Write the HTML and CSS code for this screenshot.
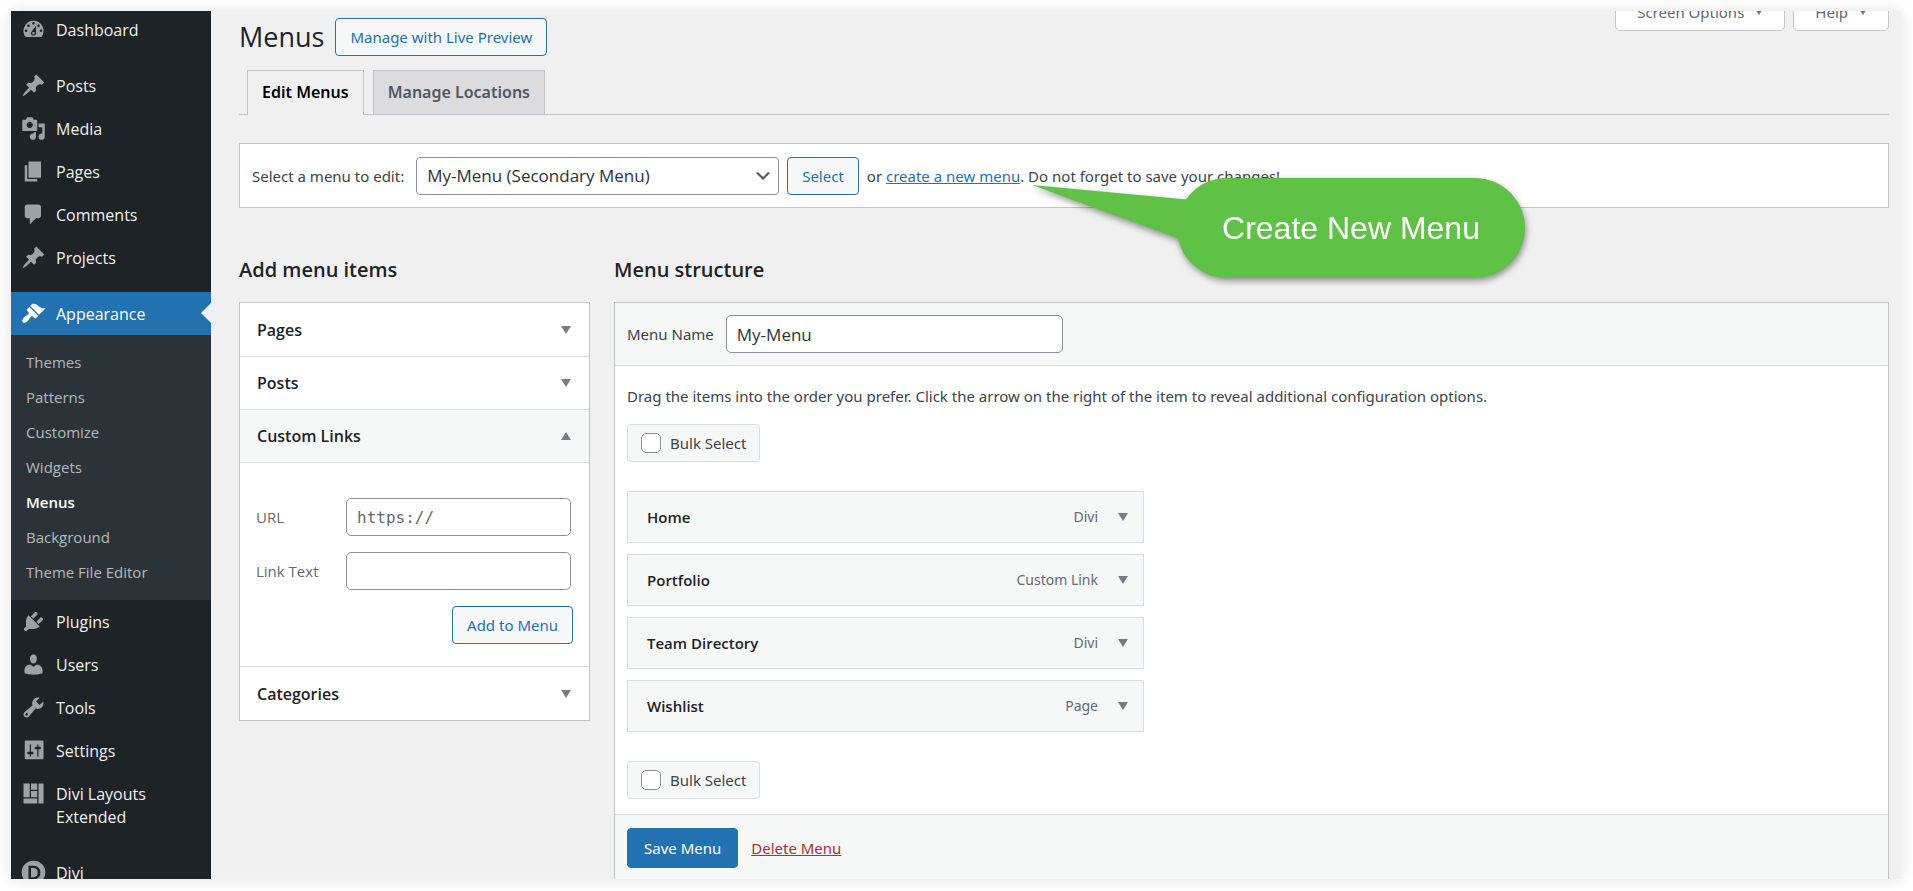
FILE: index.html
```html
<!DOCTYPE html>
<html lang="en">
<head>
<meta charset="utf-8">
<title>Menus</title>
<link rel="stylesheet" href="styles.css">
</head>
<body>
<div class="frame">
  <nav class="sidebar" aria-label="Main menu">
    <a class="item" href="#"><svg class="icon" viewBox="0 0 20 20"><path fill-rule="evenodd" d="M3.76 16h12.48A7.998 7.998 0 0 0 10 3a7.998 7.998 0 0 0-6.24 13zM10 4c.55 0 1 .45 1 1s-.45 1-1 1-1-.45-1-1 .45-1 1-1zM6 6c.55 0 1 .45 1 1s-.45 1-1 1-1-.45-1-1 .45-1 1-1zm8 0c.55 0 1 .45 1 1s-.45 1-1 1-1-.45-1-1 .45-1 1-1zm-5.37 5.55L12 7v6c0 1.1-.9 2-2 2s-2-.9-2-2c0-.57.24-1.08.63-1.45zM4 10c.55 0 1 .45 1 1s-.45 1-1 1-1-.45-1-1 .45-1 1-1zm12 0c.55 0 1 .45 1 1s-.45 1-1 1-1-.45-1-1 .45-1 1-1zm-5 3c0-.55-.45-1-1-1s-1 .45-1 1 .45 1 1 1 1-.45 1-1z"/></svg>Dashboard</a>
    <a class="item spaced" href="#"><svg class="icon" viewBox="0 0 20 20"><path d="M10.44 3.02l1.82-1.82 6.36 6.35-1.83 1.82c-1.05-.68-2.48-.57-3.41.36l-.75.75c-.92.93-1.04 2.35-.35 3.41l-1.83 1.82-2.41-2.41-2.8 2.79c-.42.42-3.38 2.71-3.8 2.29s1.86-3.39 2.28-3.81l2.79-2.79L4.1 9.36l1.83-1.82c1.05.69 2.48.57 3.4-.36l.75-.75c.93-.92 1.05-2.35.36-3.41z"/></svg>Posts</a>
    <a class="item" href="#"><svg class="icon" viewBox="0 0 20 20"><path fill-rule="evenodd" d="M13 11V4c0-.55-.45-1-1-1h-1.67L9 1H5L3.67 3H2c-.55 0-1 .45-1 1v7c0 .55.45 1 1 1h10c.55 0 1-.45 1-1zM7 4.5c1.38 0 2.5 1.12 2.5 2.5S8.38 9.5 7 9.5 4.5 8.38 4.5 7 5.62 4.5 7 4.5zM14 6h5v10.5c0 1.38-1.12 2.5-2.5 2.5S14 17.88 14 16.5s1.12-2.5 2.5-2.5c.17 0 .34.02.5.05V9h-3V6zm-4 8.05V13h2v3.5c0 1.38-1.12 2.5-2.5 2.5S7 17.88 7 16.5 8.12 14 9.5 14c.17 0 .34.02.5.05z"/></svg>Media</a>
    <a class="item" href="#"><svg class="icon" viewBox="0 0 20 20"><path d="M6 15V2h10v13H6zm-1 1h8v2H3V5h2v11z"/></svg>Pages</a>
    <a class="item" href="#"><svg class="icon" viewBox="0 0 20 20"><path d="M5 2h9c1.1 0 2 .9 2 2v7c0 1.1-.9 2-2 2h-2l-5 5v-5H5c-1.1 0-2-.9-2-2V4c0-1.1.9-2 2-2z"/></svg>Comments</a>
    <a class="item" href="#"><svg class="icon" viewBox="0 0 20 20"><path d="M10.44 3.02l1.82-1.82 6.36 6.35-1.83 1.82c-1.05-.68-2.48-.57-3.41.36l-.75.75c-.92.93-1.04 2.35-.35 3.41l-1.83 1.82-2.41-2.41-2.8 2.79c-.42.42-3.38 2.71-3.8 2.29s1.86-3.39 2.28-3.81l2.79-2.79L4.1 9.36l1.83-1.82c1.05.69 2.48.57 3.4-.36l.75-.75c.93-.92 1.05-2.35.36-3.41z"/></svg>Projects</a>
    <a class="item spaced current" href="#"><svg class="icon" viewBox="0 0 20 20"><path d="M14.48 11.06L7.41 3.99l1.5-1.5c.5-.56 2.3-.47 3.51.32 1.21.8 1.43 1.28 2.91 2.1 1.18.64 2.45 1.26 4.45.85zm-.71.71L6.7 4.7 4.93 6.47c-.39.39-.39 1.02 0 1.41l1.06 1.06c.39.39.39 1.03 0 1.42-.6.6-1.43 1.11-2.21 1.69-.35.26-.7.53-1.01.84C1.43 14.23.4 16.08 1.4 17.07c.99 1 2.84-.03 4.18-1.36.31-.31.58-.66.85-1.02.57-.78 1.08-1.61 1.69-2.21.39-.39 1.02-.39 1.41 0l1.06 1.06c.39.39 1.02.39 1.41 0z"/></svg>Appearance</a>
    <div class="submenu">
      <a href="#">Themes</a>
      <a href="#">Patterns</a>
      <a href="#">Customize</a>
      <a href="#">Widgets</a>
      <a class="active" href="#">Menus</a>
      <a href="#">Background</a>
      <a href="#">Theme File Editor</a>
    </div>
    <a class="item" href="#"><svg class="icon" viewBox="0 0 20 20"><path d="M13.11 4.36L9.87 7.6 8 5.73l3.24-3.24c.35-.34 1.05-.2 1.56.32.52.51.66 1.21.31 1.55zm-8 1.77l.91-1.12 9.01 9.01-1.19.84c-.71.71-2.63 1.16-3.82 1.16H6.14L4.9 17.26c-.59.59-1.54.59-2.12 0-.59-.58-.59-1.53 0-2.12l1.24-1.24v-3.88c0-1.13.4-3.19 1.09-3.89zm7.26 3.97l3.24-3.24c.34-.35 1.04-.21 1.55.31.52.51.66 1.21.31 1.55l-3.24 3.25z"/></svg>Plugins</a>
    <a class="item" href="#"><svg class="icon" viewBox="0 0 20 20"><path d="M10 9.25c-2.27 0-2.73-3.44-2.73-3.44C7 4.02 7.82 2 9.97 2c2.16 0 2.98 2.02 2.71 3.81 0 0-.41 3.44-2.68 3.44zm0 2.57L12.72 10c2.39 0 4.52 2.33 4.52 4.53v2.49s-3.65 1.13-7.24 1.13c-3.65 0-7.24-1.13-7.24-1.13v-2.49c0-2.25 1.94-4.48 4.47-4.48z"/></svg>Users</a>
    <a class="item" href="#"><svg class="icon" viewBox="0 0 20 20"><path fill-rule="evenodd" d="M16.68 9.77c-1.34 1.34-3.3 1.67-4.95.99l-5.41 6.52c-.99.99-2.59.99-3.58 0s-.99-2.59 0-3.57l6.52-5.42c-.68-1.65-.35-3.61.99-4.95 1.28-1.28 3.12-1.62 4.72-1.06l-2.89 2.89 2.82 2.82 2.86-2.87c.53 1.58.18 3.39-1.08 4.65zM3.81 16.21c.4.39 1.04.39 1.43 0 .4-.4.4-1.04 0-1.43-.39-.4-1.03-.4-1.43 0-.39.39-.39 1.03 0 1.43z"/></svg>Tools</a>
    <a class="item" href="#"><svg class="icon" viewBox="0 0 20 20"><path fill-rule="evenodd" d="M18 16V3c0-.55-.45-1-1-1H4c-.55 0-1 .45-1 1v13c0 .55.45 1 1 1h13c.55 0 1-.45 1-1zM8 11h1c.55 0 1 .45 1 1s-.45 1-1 1H8v1.500c0 .28-.22.5-.5.5s-.5-.22-.5-.5V13H6c-.55 0-1-.45-1-1s.45-1 1-1h1V5.500c0-.28.22-.5.5-.5s.5.22.5.5V11zm5-2h-1c-.55 0-1-.45-1-1s.45-1 1-1h1V5.500c0-.28.22-.5.5-.5s.5.22.5.5V7h1c.55 0 1 .45 1 1s-.45 1-1 1h-1v5.500c0 .28-.22.5-.5.5s-.5-.22-.5-.5V9z"/></svg>Settings</a>
    <a class="item" href="#"><svg class="icon" viewBox="0 0 20 20"><path d="M2 2h5v11H2V2zm6 0h5v5H8V2zm6 0h4v16h-4V2zM8 8h5v5H8V8zm-6 6h11v4H2v-4z"/></svg>Divi Layouts Extended</a>
    <a class="item spaced" href="#"><svg class="icon" viewBox="0 0 20 20"><path fill-rule="evenodd" d="M10 .5a9.500 9.500 0 1 0 0 19 9.500 9.500 0 0 0 0-19zM6 4.500h4c3.500 0 5.500 2.200 5.500 5.500s-2 5.500-5.500 5.500H6zM8 6.300v7.400h2c2.200 0 3.400-1.400 3.400-3.700S12.200 6.300 10 6.300z"/></svg>Divi</a>
  </nav>

  <main class="content">
    <header class="page-head">
      <h1>Menus</h1>
      <button class="button" type="button">Manage with Live Preview</button>
      <div class="screen-meta">
        <button class="meta-button" type="button">Screen Options<span class="arrow"></span></button>
        <button class="meta-button" type="button">Help<span class="arrow"></span></button>
      </div>
    </header>

    <div class="tabs">
      <a class="tab tab-active" href="#">Edit Menus</a>
      <a class="tab" href="#">Manage Locations</a>
    </div>

    <section class="manage">
      <label for="menu-select">Select a menu to edit:</label>
      <div class="select-wrap">
        <select id="menu-select"><option>My-Menu (Secondary Menu)</option></select>
        <svg class="chevron" viewBox="0 0 20 20"><path d="M5 6l5 5 5-5 2 1-7 7-7-7 2-1z"/></svg>
      </div>
      <button class="button" type="button">Select</button>
      <span class="hint">or <a href="#">create a new menu</a>. Do not forget to save your changes!</span>
      <div class="callout">
        <svg class="callout-tail" viewBox="0 0 160 60"><path d="M0 0L160 15V60L145 53z"/></svg>
        <div class="callout-body">Create New Menu</div>
      </div>
    </section>

    <div class="columns">
      <section class="col-left">
        <h2>Add menu items</h2>
        <div class="accordion">
          <button class="acc-head" type="button">Pages<span class="arrow"></span></button>
          <button class="acc-head" type="button">Posts<span class="arrow"></span></button>
          <button class="acc-head acc-open" type="button">Custom Links<span class="arrow arrow-up"></span></button>
          <div class="acc-body">
            <div class="field"><label for="url">URL</label><input class="mono" id="url" type="text" placeholder="https://"></div>
            <div class="field"><label for="link-text">Link Text</label><input id="link-text" type="text"></div>
            <button class="button" type="button">Add to Menu</button>
          </div>
          <button class="acc-head" type="button">Categories<span class="arrow"></span></button>
        </div>
      </section>

      <section class="col-right">
        <h2>Menu structure</h2>
        <div class="structure">
          <div class="structure-head"><label for="menu-name">Menu Name</label><input id="menu-name" type="text" value="My-Menu"></div>
          <div class="structure-body">
            <p>Drag the items into the order you prefer. Click the arrow on the right of the item to reveal additional configuration options.</p>
            <label class="bulk"><input type="checkbox">Bulk Select</label>
            <ul class="menu-items">
              <li><strong>Home</strong><span>Divi</span><span class="arrow"></span></li>
              <li><strong>Portfolio</strong><span>Custom Link</span><span class="arrow"></span></li>
              <li><strong>Team Directory</strong><span>Divi</span><span class="arrow"></span></li>
              <li><strong>Wishlist</strong><span>Page</span><span class="arrow"></span></li>
            </ul>
            <label class="bulk"><input type="checkbox">Bulk Select</label>
          </div>
          <div class="structure-foot">
            <button class="button primary" type="button">Save Menu</button>
            <a class="delete" href="#">Delete Menu</a>
          </div>
        </div>
      </section>
    </div>
  </main>
</div>
</body>
</html>
```
FILE: styles.css
```css
* { box-sizing: border-box; }

body {
  margin: 0;
  padding: 11px 12px 12px 11px;
  height: 100vh;
  overflow: hidden;
  background: #fff;
  color: #3c434a;
  font: 15px/24px "Noto Sans", "Open Sans", sans-serif;
}

button, input, select { font: inherit; color: inherit; }
a { color: #2271b1; }
h1, h2, p, ul { margin: 0; padding: 0; }

.frame {
  display: flex;
  height: 100%;
  overflow: hidden;
  background: #f0f0f1;
  box-shadow: 0 0 14px rgba(0, 0, 0, 0.12);
}

/* Sidebar */
.sidebar {
  flex: 0 0 200px;
  margin-top: -3px;
  background: #1d2327;
  font-family: "Open Sans", "Noto Sans", sans-serif;
}
.item {
  position: relative;
  display: flex;
  gap: 10px;
  padding: 11px 30px 9px 10px;
  color: #f0f0f1;
  font-size: 16px;
  line-height: 23px;
  text-decoration: none;
}
.spaced { margin-top: 13px; }
.icon {
  flex: none;
  width: 25px;
  height: 25px;
  margin: -2px 0 0;
  fill: #9ca2a7;
}
.current { background: #2271b1; color: #fff; }
.current .icon { fill: #fff; }
.current::after {
  content: "";
  position: absolute;
  right: 0;
  top: 11px;
  border: 10px solid transparent;
  border-left: 0;
  border-right-color: #f0f0f1;
}
.submenu {
  display: flex;
  flex-direction: column;
  padding: 10px 15px;
  background: #2c3338;
}
.submenu a {
  color: #b4b9be;
  line-height: 35px;
  text-decoration: none;
}
.submenu .active { color: #fff; font-weight: 600; }

/* Content */
.content {
  flex: 1;
  min-width: 0;
  padding: 0 12px 0 28px;
}
.page-head {
  display: flex;
  align-items: flex-start;
  gap: 11px;
  padding-top: 7px;
}
h1 {
  color: #1d2327;
  font-family: "Open Sans", "Noto Sans", sans-serif;
  font-size: 27px;
  font-weight: 400;
  line-height: 38px;
}
.button {
  height: 38px;
  padding: 0 14px;
  border: 1px solid #2271b1;
  border-radius: 4px;
  background: #f6f7f7;
  color: #2271b1;
}
.screen-meta {
  display: flex;
  gap: 8px;
  margin: -26px 0 0 auto;
}
.meta-button {
  display: flex;
  align-items: center;
  gap: 11px;
  height: 39px;
  padding: 0 21px;
  border: 1px solid #c3c4c7;
  border-radius: 0 0 5px 5px;
  background: #fff;
  color: #646970;
}
.arrow {
  flex: none;
  border: 5px solid transparent;
  border-top: 8px solid #787c82;
  border-bottom: 0;
}
.arrow-up { border-top: 0; border-bottom: 8px solid #787c82; }
.meta-button .arrow { border-width: 6px 4px 0; }

.tabs {
  display: flex;
  gap: 9px;
  margin-top: 14px;
  padding: 0 8px;
  border-bottom: 1px solid #c3c4c7;
}
.tab {
  padding: 9px 14px;
  border: 1px solid #c3c4c7;
  border-bottom: 0;
  background: #dcdcde;
  color: #50575e;
  font-size: 16px;
  font-weight: 600;
  line-height: 25px;
  text-decoration: none;
}
.tab-active {
  margin-bottom: -1px;
  background: #f0f0f1;
  color: #000;
}

.manage {
  position: relative;
  display: flex;
  align-items: center;
  gap: 8px;
  margin-top: 28px;
  padding: 13px 12px 12px;
  border: 1px solid #c3c4c7;
  background: #fff;
}
.manage label { margin-right: 4px; }
.select-wrap { position: relative; flex: 0 1 363px; }
.manage select {
  appearance: none;
  display: block;
  width: 100%;
  height: 38px;
  padding: 0 10px;
  border: 1px solid #8c8f94;
  border-radius: 4px;
  background: #fff;
  color: #2c3338;
  font-family: "Open Sans", "Noto Sans", sans-serif;
  font-size: 17px;
}
.chevron {
  position: absolute;
  right: 6px;
  top: 9px;
  width: 20px;
  height: 20px;
  fill: #50575e;
}
.callout {
  position: absolute;
  left: 792px;
  top: 34px;
  width: 493px;
  height: 100px;
  filter: drop-shadow(1px 3px 3px rgba(0, 0, 0, 0.4));
}
.callout-tail {
  position: absolute;
  left: 0;
  top: 7px;
  width: 160px;
  height: 60px;
  fill: #5fc247;
}
.callout-body {
  margin-left: 145px;
  border-radius: 50px;
  background: #5fc247;
  color: #fff;
  font: 32px/100px "Liberation Sans", Arial, sans-serif;
  text-align: center;
}

.columns {
  display: grid;
  grid-template-columns: 351px 1fr;
  gap: 24px;
  margin-top: 48px;
}
h2 {
  margin-bottom: 18px;
  color: #1d2327;
  font-family: "Open Sans", "Noto Sans", sans-serif;
  font-size: 20px;
  font-weight: 600;
  line-height: 28px;
}

.accordion { border: 1px solid #c3c4c7; background: #fff; }
.acc-head {
  display: flex;
  align-items: center;
  justify-content: space-between;
  width: 100%;
  height: 53px;
  padding: 0 18px 0 17px;
  border: 0;
  background: #fff;
  color: #1d2327;
  font-family: "Open Sans", "Noto Sans", sans-serif;
  font-size: 16px;
  font-weight: 600;
}
.acc-head + .acc-head, .acc-body { border-top: 1px solid #dcdcde; }
.acc-head.acc-open { background: #f6f7f7; }
.acc-body {
  display: flex;
  flex-direction: column;
  gap: 16px;
  padding: 35px 16px 22px;
  border-bottom: 1px solid #dcdcde;
}
.acc-body .button { align-self: flex-end; }
.field {
  display: flex;
  align-items: center;
  justify-content: space-between;
  padding-right: 2px;
  color: #646970;
}
.field label { font-family: "Open Sans", "Noto Sans", sans-serif; }
input[type="text"] {
  width: 225px;
  height: 38px;
  padding: 0 10px;
  border: 1px solid #8c8f94;
  border-radius: 5px;
  background: #fff;
  color: #2c3338;
  font-family: "Open Sans", "Noto Sans", sans-serif;
  font-size: 17px;
}
input[type="text"].mono { font: 16px "DejaVu Sans Mono", monospace; }
input::placeholder { color: #646970; opacity: 1; }

.structure { border: 1px solid #c3c4c7; background: #fff; }
.structure-head {
  display: flex;
  align-items: center;
  gap: 12px;
  padding: 12px;
  border-bottom: 1px solid #dcdcde;
  background: #f6f7f7;
}
.structure-head input[type="text"] { width: 337px; }
.structure-body { padding: 18px 12px 15px; }
.bulk {
  display: flex;
  align-items: center;
  gap: 9px;
  width: fit-content;
  height: 38px;
  padding: 0 13px;
  border: 1px solid #dcdcde;
  border-radius: 4px;
  background: #f6f7f7;
}
.bulk input {
  appearance: none;
  width: 20px;
  height: 20px;
  margin: 0;
  border: 1px solid #8c8f94;
  border-radius: 5px;
  background: #fff;
}
.structure-body p { margin-bottom: 16px; }
.menu-items {
  display: flex;
  flex-direction: column;
  gap: 11px;
  width: 517px;
  margin: 29px 0;
  list-style: none;
}
.menu-items li {
  display: flex;
  align-items: center;
  gap: 20px;
  height: 52px;
  padding: 0 15px 0 19px;
  border: 1px solid #dcdcde;
  background: #f6f7f7;
  color: #646970;
  font-size: 14px;
}
.menu-items strong {
  flex: 1;
  color: #1d2327;
  font-family: "Open Sans", "Noto Sans", sans-serif;
  font-size: 15px;
  font-weight: 600;
}
.structure-foot {
  display: flex;
  align-items: center;
  gap: 13px;
  padding: 13px 12px 40px;
  border-top: 1px solid #dcdcde;
  background: #f6f7f7;
}
.primary {
  height: 40px;
  padding: 0 16px;
  background: #2271b1;
  color: #fff;
}
.delete { color: #b32d2e; }
```
